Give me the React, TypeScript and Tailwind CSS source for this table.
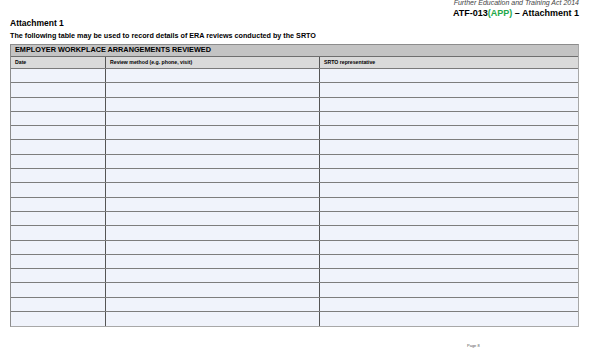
import React from 'react';

const rows = Array.from({ length: 18 }, (_, i) => i);

const App: React.FC = () => {
  return (
    <div className="w-[593px] h-[351px] bg-white overflow-hidden relative font-['Liberation_Sans',Arial,sans-serif] text-black">
      {/* Header block */}
      <div className="flex flex-col items-end pr-[14px] -mt-[1px]">
        <div className="text-[7px] leading-[7px] italic text-[#444]">Further Education and Training Act 2014</div>
        <div className="text-[9px] leading-[10px] font-bold mt-[2px]">
          ATF-013<span className="text-[#22a84a]">(APP)</span> – Attachment 1
        </div>
      </div>

      <div className="pl-[10px] mt-[1px] text-[8.5px] leading-[9px] font-bold">Attachment 1</div>
      <div className="pl-[10px] mt-[4px] text-[7.2px] leading-[8px] font-bold">
        The following table may be used to record details of ERA reviews conducted by the SRTO
      </div>

      {/* Table */}
      <div className="ml-[10px] mt-[4px] w-[569px] border border-[#8c8c8c] border-r-[#a8a8a8] border-b-[#a8a8a8]">
        <div className="h-[12px] bg-[#c3c3c3] border-b border-[#6e6e6e] px-[4px] flex items-center text-[7.3px] font-bold">
          EMPLOYER WORKPLACE ARRANGEMENTS REVIEWED
        </div>
        <div className="grid grid-cols-[95px_214px_1fr] h-[12px] bg-[#dadada] border-b border-[#7a7a7a] text-[5.2px] font-bold">
          <div className="px-[4px] flex items-center border-r border-[#555]">Date</div>
          <div className="px-[4px] flex items-center border-r border-[#555]">Review method (e.g. phone, visit)</div>
          <div className="px-[4px] flex items-center">SRTO representative</div>
        </div>
        {rows.map((r) => (
          <div
            key={r}
            className={`grid grid-cols-[95px_214px_1fr] h-[14.3px] bg-[#f0f3fb] ${r < 17 ? 'border-b border-[#7d7d7d]' : ''}`}
          >
            <div className="border-r border-[#555]" />
            <div className="border-r border-[#555]" />
            <div />
          </div>
        ))}
      </div>

      <div className="absolute left-[467px] top-[343px] text-[4px] leading-[5px] text-[#555]">Page 8</div>
    </div>
  );
};

export default App;
